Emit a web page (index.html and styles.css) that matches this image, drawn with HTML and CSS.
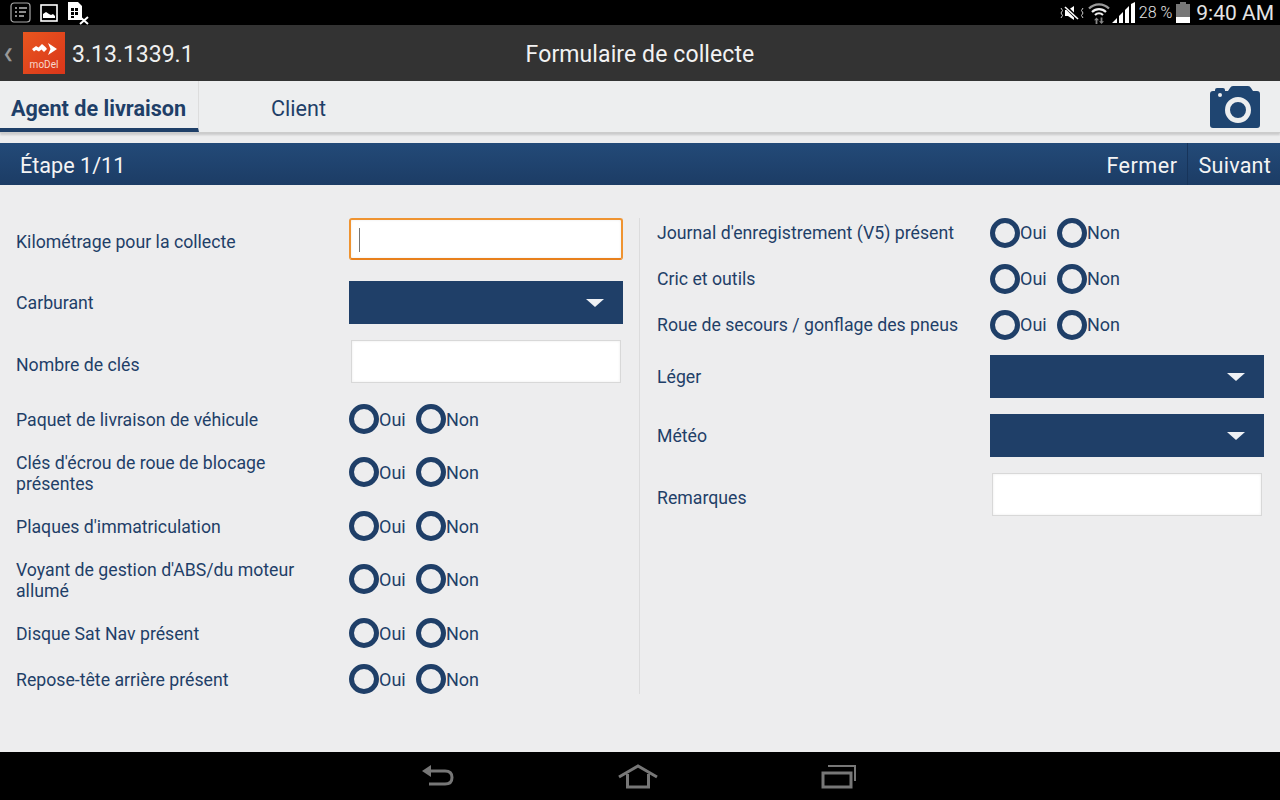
FILE: index.html
```html
<!DOCTYPE html>
<html lang="fr">
<head>
    <meta charset="UTF-8">
    <meta name="viewport" content="width=device-width, initial-scale=1.0">
    <title>Formulaire de collecte</title>
    <link rel="stylesheet" href="styles.css">
</head>
<body>
    <div class="screen">
        <div class="status-bar">
            <div class="status-left">
                <svg width="21" height="21" viewBox="0 0 21 21"><rect x="1" y="1" width="19" height="19" rx="3" fill="none" stroke="#aaa" stroke-width="1.2"/><path d="M5 6h2M9 6h8M5 10h2M9 10h7M5 14h2M9 14h5" stroke="#bbb" stroke-width="1.3" fill="none"/></svg>
                <svg class="icon-picture" width="18" height="18" viewBox="0 0 18 18"><rect x="1" y="1" width="16" height="16" fill="#000" stroke="#fff" stroke-width="1.6"/><path d="M3 14v-4l3-2 3 2 2 1 2-1 2 2v2z" fill="#fff"/></svg>
                <svg class="icon-doc" width="24" height="24" viewBox="0 0 24 24"><path d="M1 0h10l4 4v14H1z" fill="#fff"/><path d="M4 6h3v3H4zM8 6h3v3H8zM4 10h3v3H4zM8 10h3v3H8zM4 14h3v2H4z" fill="#000"/><path d="M13 15l8 7M21 15l-8 7" stroke="#fff" stroke-width="2" fill="none"/></svg>
            </div>
            <div class="status-right">
                <svg width="24" height="16" viewBox="0 0 24 16"><path d="M5 5h3l6-4v14l-6-4H5z" fill="#fff"/><path d="M5 1l14 14" stroke="#000" stroke-width="3.500"/><path d="M5 2l13 12" stroke="#fff" stroke-width="1.600"/><path d="M1 3l1.500 2.500L1 8l1.500 2.500L1 13M23 3l-1.500 2.500L23 8l-1.500 2.500L23 13" stroke="#ccc" stroke-width="1" fill="none"/></svg>
                <svg class="wifi" width="22" height="22" viewBox="0 0 22 22"><path d="M1 6.500a14 14 0 0 1 20 0" stroke="#999" stroke-width="2.200" fill="none"/><path d="M4 10a10 10 0 0 1 14 0" stroke="#eee" stroke-width="2.200" fill="none"/><path d="M7 13a6 6 0 0 1 8 0" stroke="#eee" stroke-width="2.200" fill="none"/><path d="M8.500 15.500l-2.500 2.800h1.600V22h1.800v-3.700H11zM13.500 22l2.500-2.800h-1.600V15.500h-1.800v3.700H11z" fill="#888"/></svg>
                <svg class="signal" width="24" height="21" viewBox="0 0 24 21"><path d="M0 21l5-5v5zM7 21v-7l4-4v11zM13 21V8l4-4v17zM19 21V2l4-2v21z" fill="#fff"/></svg>
                <span class="battery-text">28 %</span>
                <div class="battery"><div class="battery-cap"></div><div class="battery-body"><div class="battery-fill"></div></div></div>
                <span class="clock">9:40 AM</span>
            </div>
        </div>

        <div class="app-bar">
            <span class="back">&#10094;</span>
            <div class="logo">
                <svg width="25" height="12" viewBox="0 0 25 12"><path d="M0 6l4-3 2.500 1.500L10 1l3.500 3L15 6l-3 3-2.500-2.500L7 8.500 4 7 2 8.500zM16 0l9 6-9 6 2.500-6z" fill="#fff"/></svg>
                <span class="logo-text">moDel</span>
            </div>
            <span class="version">3.13.1339.1</span>
            <span class="app-title">Formulaire de collecte</span>
        </div>

        <div class="tabs">
            <div class="tab tab-active">Agent de livraison</div>
            <div class="tab">Client</div>
            <svg class="camera" width="50" height="42" viewBox="0 0 50 42"><path d="M3 5h2V4q0-2 2-2h6q2 0 2 2v1h3l2-3q1-2 3-2h15q2 0 3 2l2 3h4q3 0 3 3v31q0 3-3 3H3q-3 0-3-3V8q0-3 3-3z" fill="#1f4571"/><circle cx="10" cy="9" r="2" fill="#edeeef"/><circle cx="28" cy="24" r="10.500" fill="none" stroke="#edeeef" stroke-width="5"/></svg>
        </div>

        <div class="step-bar">
            <span class="step-name">Étape 1/11</span>
            <div class="step-actions">
                <span class="step-btn step-close">Fermer</span>
                <span class="step-btn step-next">Suivant</span>
            </div>
        </div>

        <div class="form">
            <div class="col col-left">
                <div class="row row-input">
                    <label class="lbl lbl-low">Kilométrage pour la collecte</label>
                    <div class="field field-focus"><span class="caret"></span></div>
                </div>
                <div class="row row-select">
                    <label class="lbl">Carburant</label>
                    <div class="select"><span class="arrow"></span></div>
                </div>
                <div class="row row-plain">
                    <label class="lbl lbl-low">Nombre de clés</label>
                    <div class="field"></div>
                </div>
                <div class="row row-radio r1">
                    <label class="lbl">Paquet de livraison de véhicule</label>
                    <div class="radios"><span class="radio"></span><span class="opt">Oui</span><span class="radio"></span><span class="opt">Non</span></div>
                </div>
                <div class="row row-radio row-two r2">
                    <label class="lbl">Clés d'écrou de roue de blocage présentes</label>
                    <div class="radios"><span class="radio"></span><span class="opt">Oui</span><span class="radio"></span><span class="opt">Non</span></div>
                </div>
                <div class="row row-radio r3">
                    <label class="lbl">Plaques d'immatriculation</label>
                    <div class="radios"><span class="radio"></span><span class="opt">Oui</span><span class="radio"></span><span class="opt">Non</span></div>
                </div>
                <div class="row row-radio row-two r2">
                    <label class="lbl">Voyant de gestion d'ABS/du moteur allumé</label>
                    <div class="radios"><span class="radio"></span><span class="opt">Oui</span><span class="radio"></span><span class="opt">Non</span></div>
                </div>
                <div class="row row-radio r3">
                    <label class="lbl">Disque Sat Nav présent</label>
                    <div class="radios"><span class="radio"></span><span class="opt">Oui</span><span class="radio"></span><span class="opt">Non</span></div>
                </div>
                <div class="row row-radio r1">
                    <label class="lbl">Repose-tête arrière présent</label>
                    <div class="radios"><span class="radio"></span><span class="opt">Oui</span><span class="radio"></span><span class="opt">Non</span></div>
                </div>
            </div>
            <div class="divider"></div>
            <div class="col col-right">
                <div class="row row-radio">
                    <label class="lbl">Journal d'enregistrement (V5) présent</label>
                    <div class="radios"><span class="radio"></span><span class="opt">Oui</span><span class="radio"></span><span class="opt">Non</span></div>
                </div>
                <div class="row row-radio rr">
                    <label class="lbl">Cric et outils</label>
                    <div class="radios"><span class="radio"></span><span class="opt">Oui</span><span class="radio"></span><span class="opt">Non</span></div>
                </div>
                <div class="row row-radio rr">
                    <label class="lbl">Roue de secours / gonflage des pneus</label>
                    <div class="radios"><span class="radio"></span><span class="opt">Oui</span><span class="radio"></span><span class="opt">Non</span></div>
                </div>
                <div class="row row-select rs1">
                    <label class="lbl">Léger</label>
                    <div class="select"><span class="arrow"></span></div>
                </div>
                <div class="row row-select rs2">
                    <label class="lbl">Météo</label>
                    <div class="select"><span class="arrow"></span></div>
                </div>
                <div class="row row-plain rs2">
                    <label class="lbl lbl-low">Remarques</label>
                    <div class="field"></div>
                </div>
            </div>
        </div>

        <div class="nav-bar">
            <svg width="34" height="24" viewBox="0 0 34 24"><path d="M5 7h19q7 0 7 6.500T24 20H8" fill="none" stroke="#777" stroke-width="3"/><path d="M1 7l9-6v12z" fill="#777"/></svg>
            <svg width="42" height="26" viewBox="0 0 42 26"><path d="M2 14L21 3l19 11" fill="none" stroke="#777" stroke-width="3"/><path d="M10.500 11v13h21V11" fill="none" stroke="#777" stroke-width="3"/></svg>
            <svg width="36" height="26" viewBox="0 0 36 26"><rect x="2" y="10" width="28" height="14" fill="none" stroke="#777" stroke-width="3"/><path d="M7 3h27v15" fill="none" stroke="#777" stroke-width="2"/></svg>
        </div>
    </div>
</body>
</html>
```

FILE: styles.css
```css
* {
    box-sizing: border-box;
}

body {
    margin: 0;
    font-family: Roboto, "Liberation Sans", sans-serif;
    background-color: #ededee;
}

.screen {
    width: 1280px;
    height: 800px;
    display: flex;
    flex-direction: column;
    overflow: hidden;
}

/* status bar */
.status-bar {
    height: 25px;
    background-color: #000;
    display: flex;
    justify-content: space-between;
    align-items: center;
    flex-shrink: 0;
}

.status-left {
    display: flex;
    align-items: flex-start;
    padding-left: 10px;
    height: 25px;
    padding-top: 2px;
}

.icon-picture {
    margin: 2px 0 0 9px;
}

.icon-doc {
    margin-left: 9px;
}

.status-right {
    display: flex;
    align-items: center;
    padding-right: 6px;
    color: #e4e4e4;
}

.wifi {
    margin-left: 4px;
}

.signal {
    margin-left: 2px;
}

.battery-text {
    font-size: 16px;
    font-weight: 300;
    margin-left: 3px;
}

.battery {
    width: 14px;
    margin-left: 4px;
    display: flex;
    flex-direction: column;
    align-items: center;
}

.battery-cap {
    width: 6px;
    height: 2px;
    background-color: #777;
}

.battery-body {
    width: 14px;
    height: 19px;
    background-color: #777;
    display: flex;
    align-items: flex-end;
}

.battery-fill {
    width: 100%;
    height: 6px;
    background-color: #fff;
}

.clock {
    font-size: 21px;
    margin-left: 6px;
}

/* app bar */
.app-bar {
    height: 56px;
    background-color: #333;
    display: flex;
    align-items: center;
    position: relative;
    color: #fff;
    flex-shrink: 0;
}

.back {
    width: 23px;
    padding-left: 3px;
    font-size: 13px;
    color: #999;
}

.logo {
    width: 42px;
    height: 42px;
    background: linear-gradient(135deg, #e8561f, #da361a);
    display: flex;
    flex-direction: column;
    align-items: center;
    padding-top: 11px;
}

.logo-text {
    font-size: 10px;
    line-height: 12px;
    margin-top: 4px;
    color: #f8d8cc;
}

.version {
    font-size: 23px;
    margin: 2px 0 0 7px;
    color: #f0f0f0;
}

.app-title {
    position: absolute;
    left: 0;
    right: 0;
    top: 16px;
    text-align: center;
    font-size: 23px;
    letter-spacing: 0.1px;
    color: #f2f2f2;
}

/* tabs */
.tabs {
    height: 52px;
    display: flex;
    align-items: stretch;
    position: relative;
    background-color: #edeeef;
    border-bottom: 1px solid #ccc;
    box-shadow: 0 2px 2px rgba(0, 0, 0, 0.15);
    flex-shrink: 0;
}

.tab {
    font-size: 21.6px;
    color: #1f3f68;
    padding-left: 72px;
    padding-top: 4px;
    display: flex;
    align-items: center;
}

.tab-active {
    width: 199px;
    padding-left: 11px;
    padding-top: 8px;
    font-weight: 700;
    border-bottom: 4px solid #1f3f68;
    border-right: 1px solid #ddd;
}

.camera {
    position: absolute;
    right: 20px;
    top: 5px;
}

/* step bar */
.step-bar {
    height: 42px;
    margin-top: 10px;
    background: linear-gradient(#234a78, #1c3c65);
    color: #f4f4f4;
    font-size: 21.6px;
    display: flex;
    justify-content: space-between;
    align-items: stretch;
    flex-shrink: 0;
}

.step-name {
    padding: 2px 0 0 20px;
    display: flex;
    align-items: center;
}

.step-actions {
    display: flex;
}

.step-btn {
    display: flex;
    align-items: center;
    padding: 2px 9px 0 11px;
    letter-spacing: 0.2px;
}

.step-close {
    letter-spacing: 0.5px;
}

.step-next {
    border-left: 1px solid #17345a;
}

/* form */
.form {
    flex: 1;
    display: flex;
    padding: 33px 16px 0;
}

.col {
    width: 607px;
    display: flex;
    flex-direction: column;
}

.divider {
    width: 1px;
    height: 476px;
    margin: 0 17px 0 16px;
    background-color: #dcdcdd;
}

.row {
    display: flex;
    align-items: center;
}

.lbl {
    width: 333px;
    padding-right: 20px;
    padding-top: 2px;
    font-size: 17.7px;
    line-height: 21px;
    color: #1f3f68;
}

.col-left .row-two .lbl {
    padding-top: 4px;
    padding-right: 30px;
}

.lbl-low {
    padding-top: 7px;
}

.col-right .row-radio .lbl {
    padding-top: 0;
}

.col-right .lbl-low {
    padding-top: 7px;
}

.row-input,
.row-plain {
    height: 43px;
}

.row-input {
    height: 42px;
}

.row-select {
    height: 43px;
    margin-top: 21px;
}

.row-plain {
    margin-top: 16px;
}

.field {
    width: 270px;
    height: 43px;
    margin-left: 2px;
    background-color: #fff;
    border: 1px solid #d8d8d8;
    box-shadow: inset 0 0 3px rgba(0, 0, 0, 0.08);
}

.field-focus {
    width: 274px;
    height: 42px;
    margin-left: 0;
    border: 2px solid #ef9330;
    border-bottom-color: #e8801c;
    border-radius: 3px;
    padding: 8px 0 0 8px;
    display: flex;
    align-items: flex-start;
}

.caret {
    width: 1px;
    height: 24px;
    background-color: #777;
}

.select {
    width: 274px;
    height: 43px;
    background-color: #1f3f68;
    display: flex;
    justify-content: flex-end;
    align-items: center;
    padding-right: 19px;
}

.arrow {
    width: 0;
    height: 0;
    border-left: 9px solid transparent;
    border-right: 9px solid transparent;
    border-top: 8px solid #eef1f5;
}

.row-radio {
    height: 30px;
}

.row-two {
    height: 42px;
}

.r1 {
    margin-top: 21px;
}

.r2 {
    margin-top: 17px;
}

.r3 {
    margin-top: 18px;
}

.r1:last-child {
    margin-top: 16px;
}

.rr {
    margin-top: 16px;
}

.rs1 {
    margin-top: 15px;
}

.rs2 {
    margin-top: 16px;
}

.radios {
    display: flex;
    align-items: center;
}

.radio {
    width: 30px;
    height: 30px;
    border: 5px solid #1f3f68;
    border-radius: 50%;
}

.opt {
    font-size: 18px;
    color: #1f3f68;
    width: 37px;
}

.col-right .opt {
    padding-bottom: 2px;
}

/* nav */
.nav-bar {
    height: 48px;
    background-color: #000;
    display: flex;
    align-items: center;
    padding-left: 421px;
    gap: 162px;
    flex-shrink: 0;
}
```
